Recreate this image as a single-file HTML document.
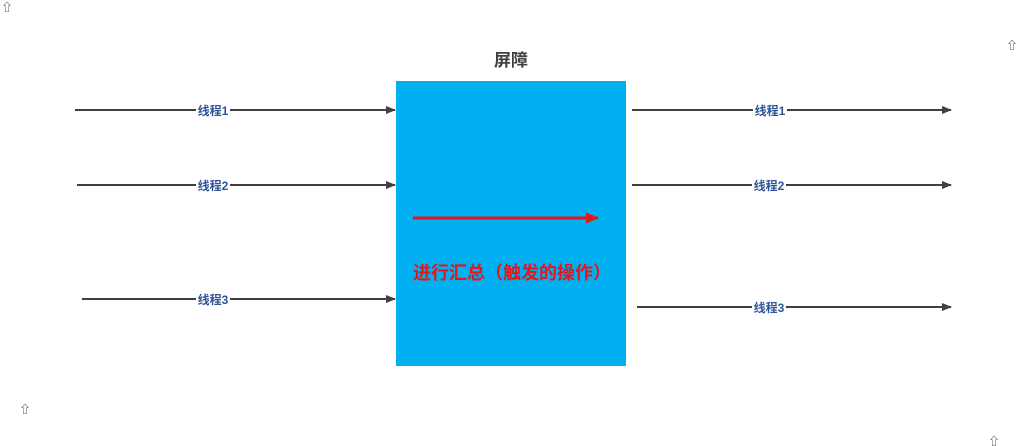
<!DOCTYPE html>
<html><head><meta charset="utf-8"><style>
html,body{margin:0;padding:0;background:#fff;width:1019px;height:446px;overflow:hidden}
svg{display:block}
text{font-family:"Liberation Sans","Noto Sans CJK SC",sans-serif}
</style></head><body>
<svg width="1019" height="446" viewBox="0 0 1019 446">
<defs>
<marker id="a" markerWidth="10" markerHeight="8" refX="9" refY="4" orient="auto" markerUnits="userSpaceOnUse"><path d="M0,0L10,4L0,8z" fill="#404040"/></marker>
<marker id="r" markerWidth="13" markerHeight="11" refX="12" refY="5.5" orient="auto" markerUnits="userSpaceOnUse"><path d="M0,0L13,5.5L0,11z" fill="#e8141b"/></marker>
</defs>
<rect x="396" y="81" width="230" height="285" fill="#00b0f0"/>
<text x="511" y="66" text-anchor="middle" font-size="17" font-weight="bold" fill="#404040">屏障</text>
<g stroke="#404040" stroke-width="2" marker-end="url(#a)">
<line x1="75" y1="110" x2="395" y2="110"/>
<line x1="77" y1="185" x2="395" y2="185"/>
<line x1="82" y1="299" x2="395" y2="299"/>
<line x1="632" y1="110" x2="951" y2="110"/>
<line x1="632" y1="185" x2="951" y2="185"/>
<line x1="637" y1="307" x2="951" y2="307"/>
</g>
<g font-size="12" font-weight="bold" fill="#2f5597" text-anchor="middle">
<rect x="196" y="102" width="34" height="16" fill="#fff"/><text x="213" y="115">线程1</text>
<rect x="196" y="177" width="34" height="16" fill="#fff"/><text x="213" y="190">线程2</text>
<rect x="196" y="291" width="34" height="16" fill="#fff"/><text x="213" y="304">线程3</text>
<rect x="753" y="102" width="34" height="16" fill="#fff"/><text x="770" y="115">线程1</text>
<rect x="752" y="177" width="34" height="16" fill="#fff"/><text x="769" y="190">线程2</text>
<rect x="752" y="299" width="34" height="16" fill="#fff"/><text x="769" y="312">线程3</text>
</g>
<line x1="413" y1="218" x2="598" y2="218" stroke="#e8141b" stroke-width="3" marker-end="url(#r)"/>
<text x="512" y="279" text-anchor="middle" font-size="18" font-weight="bold" fill="#e8141b">进行汇总（触发的操作）</text>
<g font-size="11" fill="#333" text-anchor="middle">
<text x="7" y="11">⇧</text>
<text x="1012" y="49">⇧</text>
<text x="25" y="413">⇧</text>
<text x="994" y="445">⇧</text>
</g>
</svg>
</body></html>
